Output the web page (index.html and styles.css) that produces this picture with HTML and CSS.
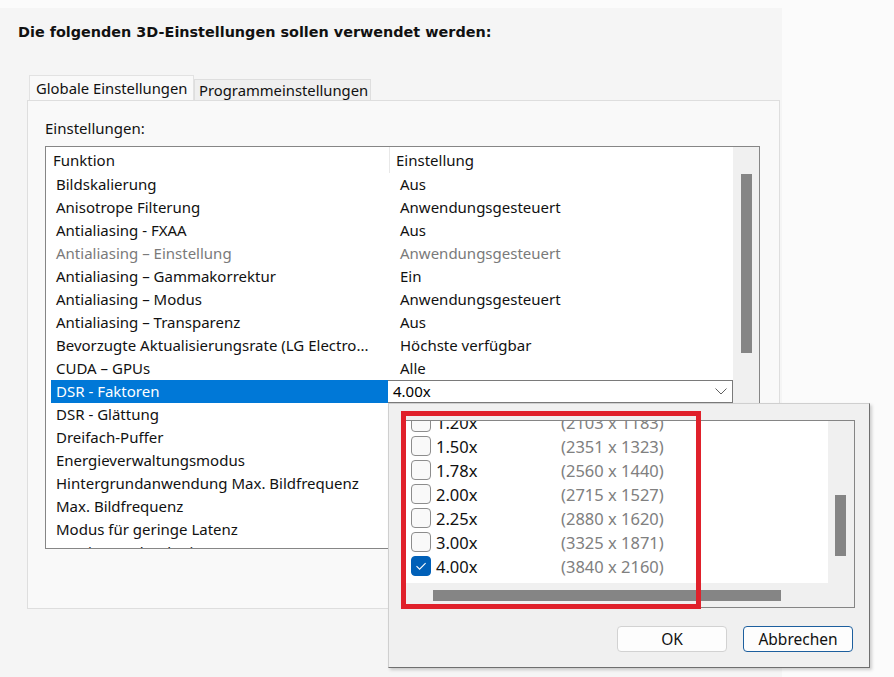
FILE: index.html
```html
<!DOCTYPE html>
<html lang="de">
<head>
<meta charset="utf-8">
<title>3D-Einstellungen</title>
<link rel="stylesheet" href="styles.css">
</head>
<body>
<div class="window">
  <h1 class="heading">Die folgenden 3D-Einstellungen sollen verwendet werden:</h1>
  <div class="tabs">
    <div class="tab active">Globale Einstellungen</div>
    <div class="tab">Programmeinstellungen</div>
  </div>
  <div class="panel">
    <div class="label">Einstellungen:</div>
    <div class="list">
      <div class="list-main">
        <div class="list-head">
          <div class="h1">Funktion</div>
          <div class="h2">Einstellung</div>
        </div>
        <div class="row"><div class="c1">Bildskalierung</div><div class="c2">Aus</div></div>
        <div class="row"><div class="c1">Anisotrope Filterung</div><div class="c2">Anwendungsgesteuert</div></div>
        <div class="row"><div class="c1">Antialiasing - FXAA</div><div class="c2">Aus</div></div>
        <div class="row disabled"><div class="c1">Antialiasing – Einstellung</div><div class="c2">Anwendungsgesteuert</div></div>
        <div class="row"><div class="c1">Antialiasing – Gammakorrektur</div><div class="c2">Ein</div></div>
        <div class="row"><div class="c1">Antialiasing – Modus</div><div class="c2">Anwendungsgesteuert</div></div>
        <div class="row"><div class="c1">Antialiasing – Transparenz</div><div class="c2">Aus</div></div>
        <div class="row"><div class="c1">Bevorzugte Aktualisierungsrate (LG Electro...</div><div class="c2">Höchste verfügbar</div></div>
        <div class="row"><div class="c1">CUDA – GPUs</div><div class="c2">Alle</div></div>
        <div class="row selected"><div class="c1">DSR - Faktoren</div>
          <div class="combo"><span>4.00x</span>
            <svg class="chev" width="12" height="7" viewBox="0 0 12 7"><path d="M0.5 0.5 L6 6 L11.5 0.5" fill="none" stroke="#606060" stroke-width="1"/></svg>
          </div>
        </div>
        <div class="row"><div class="c1">DSR - Glättung</div><div class="c2">Aus</div></div>
        <div class="row"><div class="c1">Dreifach-Puffer</div><div class="c2">Aus</div></div>
        <div class="row"><div class="c1">Energieverwaltungsmodus</div><div class="c2">Normal</div></div>
        <div class="row"><div class="c1">Hintergrundanwendung Max. Bildfrequenz</div><div class="c2">Aus</div></div>
        <div class="row"><div class="c1">Max. Bildfrequenz</div><div class="c2">Aus</div></div>
        <div class="row"><div class="c1">Modus für geringe Latenz</div><div class="c2">Aus</div></div>
        <div class="row"><div class="c1">Monitor-Technologie</div><div class="c2">G-SYNC-kompatibel</div></div>
      </div>
      <div class="vscroll"><div class="vthumb"></div></div>
    </div>
  </div>
</div>

<div class="popup">
  <div class="plist">
    <div class="plist-main">
      <div class="items">
        <div class="item"><span class="cb"></span><span class="fac">1.20x</span><span class="res">(2103 x 1183)</span></div>
        <div class="item"><span class="cb"></span><span class="fac">1.50x</span><span class="res">(2351 x 1323)</span></div>
        <div class="item"><span class="cb"></span><span class="fac">1.78x</span><span class="res">(2560 x 1440)</span></div>
        <div class="item"><span class="cb"></span><span class="fac">2.00x</span><span class="res">(2715 x 1527)</span></div>
        <div class="item"><span class="cb"></span><span class="fac">2.25x</span><span class="res">(2880 x 1620)</span></div>
        <div class="item"><span class="cb"></span><span class="fac">3.00x</span><span class="res">(3325 x 1871)</span></div>
        <div class="item"><span class="cb checked"><svg width="20" height="20" viewBox="0 0 20 20"><path d="M5.5 10.2 L8.6 13.2 L14.6 7.2" fill="none" stroke="#ffffff" stroke-width="1.1"/></svg></span><span class="fac">4.00x</span><span class="res">(3840 x 2160)</span></div>
      </div>
    </div>
    <div class="pvscroll"><div class="pvthumb"></div></div>
    <div class="phscroll"><div class="phthumb"></div></div>
    <div class="pcorner"></div>
  </div>
  <div class="buttons">
    <div class="btn">OK</div>
    <div class="btn default">Abbrechen</div>
  </div>
</div>

<div class="annot"></div>
</body>
</html>
```

FILE: styles.css
```css
html, body {
  margin: 0;
  padding: 0;
}
body {
  background: #fbfbfb;
  width: 894px;
  height: 677px;
  overflow: hidden;
  position: relative;
  font-family: "Noto Sans", "Open Sans", sans-serif;
  font-size: 15px;
  color: #111;
}
.window {
  margin-top: 8px;
  width: 782px;
  height: 669px;
  background: #f5f5f5;
  overflow: hidden;
}
.heading {
  margin: 0;
  padding: 15px 0 0 18px;
  height: 18px;
  line-height: 18px;
  font-family: "DejaVu Sans", sans-serif;
  font-weight: bold;
  font-size: 14.4px;
  color: #111;
}
.tabs {
  display: flex;
  align-items: flex-end;
  margin: 34px 0 0 29px;
  height: 25px;
}
.tab {
  box-sizing: border-box;
  height: 21px;
  width: 177px;
  padding-left: 4px;
  line-height: 21px;
  background: #efefef;
  border: 1px solid #dedede;
  border-bottom: none;
  font-size: 14.8px;
  color: #111;
}
.tab.active {
  height: 25px;
  width: 165px;
  line-height: 25px;
  padding-left: 6px;
  background: #f9f9f9;
  border-color: #e2e2e2;
}
.panel {
  box-sizing: border-box;
  margin-left: 27px;
  width: 753px;
  height: 509px;
  background: #f9f9f9;
  border: 1px solid #dedede;
  padding: 17px 0 0 17px;
}
.label {
  height: 20px;
  line-height: 20px;
  margin-bottom: 8px;
}
.list {
  box-sizing: border-box;
  width: 715px;
  height: 403px;
  border: 1px solid #868686;
  background: #fff;
  display: flex;
  overflow: hidden;
}
.list-main {
  width: 687px;
  overflow: hidden;
}
.list-head {
  display: flex;
  height: 26px;
  line-height: 27px;
}
.h1 {
  width: 336px;
  padding-left: 7px;
  border-right: 1px solid #e8e8e8;
}
.h2 {
  padding-left: 6px;
}
.row {
  display: flex;
  height: 23px;
  line-height: 23px;
  white-space: nowrap;
}
.c1 {
  box-sizing: border-box;
  width: 337px;
  margin-left: 5px;
  padding-left: 5px;
  overflow: hidden;
}
.c2 {
  padding-left: 12px;
}
.row.disabled {
  color: #7a7a7a;
}
.row.selected .c1 {
  background: #0078d7;
  color: #fff;
}
.combo {
  box-sizing: border-box;
  width: 345px;
  height: 23px;
  line-height: 21px;
  border: 1px solid #7a7a7a;
  border-left: none;
  background: #fff;
  padding-left: 5px;
  display: flex;
  justify-content: space-between;
  align-items: center;
  padding-right: 5px;
  color: #000;
}
.vscroll {
  width: 26px;
  background: #f0f0f0;
  padding: 27px 0 0 8px;
  box-sizing: border-box;
}
.vthumb {
  width: 11px;
  height: 179px;
  background: #858585;
}

/* dropdown popup */
.popup {
  position: absolute;
  left: 388px;
  top: 403px;
  box-sizing: border-box;
  width: 482px;
  height: 265px;
  background: #f0f0f0;
  border: 1px solid #cfcfcf;
  border-right-color: #6f6f6f;
  border-bottom-color: #6f6f6f;
  box-shadow: 2px 2px 3px rgba(0, 0, 0, 0.18);
  padding: 16px 15px 0 16px;
}
.plist {
  box-sizing: border-box;
  width: 450px;
  height: 188px;
  border: 1px solid #858585;
  display: grid;
  grid-template-columns: 422px 26px;
  grid-template-rows: 162px 24px;
}
.plist-main {
  background: #fff;
  overflow: hidden;
}
.items {
  margin-top: -11px;
}
.item {
  display: flex;
  align-items: center;
  height: 24px;
  padding-left: 5px;
  font-size: 16.5px;
  white-space: nowrap;
}
.cb {
  box-sizing: border-box;
  width: 20px;
  height: 20px;
  border: 1px solid #8d8d8d;
  border-radius: 4px;
  background: #f9f9f9;
  margin-right: 5px;
  flex: none;
}
.cb.checked {
  background: #0060b8;
  border-color: #0060b8;
}
.cb.checked svg {
  display: block;
  margin: -1px;
}
.fac {
  width: 125px;
  color: #111;
}
.res {
  color: #808080;
}
.pvscroll {
  background: #f0f0f0;
  padding: 74px 0 0 7px;
  box-sizing: border-box;
}
.pvthumb {
  width: 11px;
  height: 61px;
  background: #858585;
}
.phscroll {
  background: #f0f0f0;
  padding: 7px 0 0 27px;
  box-sizing: border-box;
}
.phthumb {
  width: 348px;
  height: 11px;
  background: #858585;
}
.pcorner {
  background: #f0f0f0;
}
.buttons {
  display: flex;
  justify-content: flex-end;
  gap: 16px;
  margin-top: 18px;
  margin-right: 1px;
}
.btn {
  box-sizing: border-box;
  width: 110px;
  height: 26px;
  line-height: 24px;
  text-align: center;
  background: #fdfdfd;
  border: 1px solid #d2d2d2;
  border-radius: 4px;
  font-size: 15.5px;
  color: #111;
}
.btn.default {
  border-color: #1d5f9e;
}

/* annotation rectangle */
.annot {
  position: absolute;
  left: 401px;
  top: 411px;
  box-sizing: border-box;
  width: 300px;
  height: 198px;
  border: 5px solid #e0212b;
}
```
